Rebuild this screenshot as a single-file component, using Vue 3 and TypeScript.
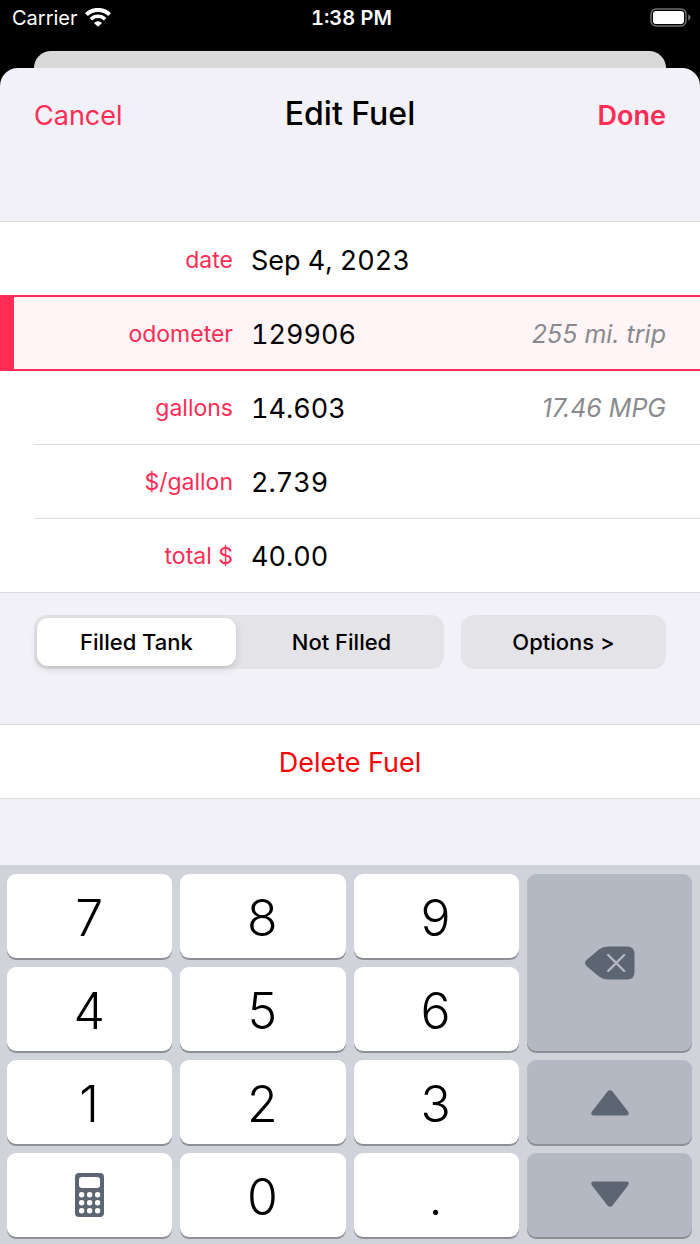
<script setup lang="ts">
import { reactive, ref } from 'vue'

interface Field {
  id: string
  label: string
  value: string
  note?: string
}

const fields = reactive<Field[]>([
  { id: 'date', label: 'date', value: 'Sep 4, 2023' },
  { id: 'odometer', label: 'odometer', value: '129906', note: '255 mi. trip' },
  { id: 'gallons', label: 'gallons', value: '14.603', note: '17.46 MPG' },
  { id: 'price', label: '$/gallon', value: '2.739' },
  { id: 'total', label: 'total $', value: '40.00' },
])

const active = ref(1)
const fill = ref('filled')
const keys = ['7', '8', '9', '4', '5', '6', '1', '2', '3', 'calc', '0', '.']
const dotColumns = [6, 14, 22]
const dotRows = [22, 30, 38]

function press(key: string) {
  if (key !== 'calc') fields[active.value].value += key
}
function erase() {
  fields[active.value].value = fields[active.value].value.slice(0, -1)
}
function move(step: number) {
  active.value = Math.min(fields.length - 1, Math.max(0, active.value + step))
}
</script>

<template>
  <div class="screen">
    <div class="status">
      <div class="carrier">
        <span>Carrier</span>
        <svg width="26" height="19" viewBox="0 0 26 19" aria-hidden="true">
          <g fill="none" stroke="#fff">
            <path d="M1.4 6.6A16.7 16.7 0 0 1 24.6 6.6" stroke-width="4" />
            <path d="M5.9 11.2A10.2 10.2 0 0 1 20.1 11.2" stroke-width="3.6" />
          </g>
          <path d="M9 14.9a5.8 5.8 0 0 1 8 0L13 18.8z" fill="#fff" />
        </svg>
      </div>
      <div class="clock">1:38 PM</div>
      <svg class="battery" width="41" height="20" viewBox="0 0 41 20" aria-hidden="true">
        <rect x="1" y="1" width="35" height="17" rx="5" fill="none" stroke="#707070" stroke-width="1.5" />
        <rect x="3" y="3" width="31" height="13" rx="3" fill="#fff" />
        <path d="M38.2 6.5c3 1 3 5 0 6z" fill="#707070" />
      </svg>
    </div>
    <div class="behind"></div>

    <main class="sheet">
      <header class="bar">
        <button type="button" class="cancel">Cancel</button>
        <h1>Edit Fuel</h1>
        <button type="button" class="done">Done</button>
      </header>

      <form class="fields" @submit.prevent>
        <div v-for="(field, i) in fields" :key="field.id" class="row" :class="{ active: i === active }">
          <label :for="field.id">{{ field.label }}</label>
          <input :id="field.id" v-model="field.value" type="text" autocomplete="off" @focus="active = i" />
          <span v-if="field.note" class="note">{{ field.note }}</span>
        </div>
      </form>

      <div class="choices">
        <div class="segmented" role="radiogroup" aria-label="Tank">
          <label class="segment"><input v-model="fill" type="radio" name="fill" value="filled" /><span>Filled Tank</span></label>
          <label class="segment"><input v-model="fill" type="radio" name="fill" value="partial" /><span>Not Filled</span></label>
        </div>
        <button type="button" class="options">Options &gt;</button>
      </div>

      <button type="button" class="delete">Delete Fuel</button>

      <div class="keyboard">
        <div class="digits">
          <button v-for="key in keys" :key="key" type="button" class="key" :aria-label="key === 'calc' ? 'Calculator' : key" @click="press(key)">
            <svg v-if="key === 'calc'" width="29" height="44" viewBox="0 0 29 44" aria-hidden="true">
              <rect width="29" height="44" rx="4" fill="#5d6573" />
              <rect x="4" y="4" width="21" height="11" rx="3" fill="#fff" />
              <template v-for="y in dotRows" :key="y">
                <circle v-for="x in dotColumns" :key="x" :cx="x + 0.6" :cy="y - 0.2" r="2.7" fill="#fff" />
              </template>
            </svg>
            <span v-else class="digit">{{ key }}</span>
          </button>
        </div>
        <div class="actions">
          <button type="button" class="key dark" aria-label="Delete" @click="erase">
            <svg width="50" height="34" viewBox="0 0 50 34" aria-hidden="true">
              <path d="M1.5 14 14 3.5Q18 .5 23 .5H42Q49.500 .5 49.500 8V26Q49.500 33.500 42 33.500H23Q18 33.500 14 30.500L1.500 20Q-1.500 17 1.500 14Z" fill="#5d6573" />
              <path d="M23.200 9 39.200 25M39.200 9 23.200 25" fill="none" stroke="#b4b8c3" stroke-width="2.4" stroke-linecap="round" />
            </svg>
          </button>
          <button type="button" class="key dark" aria-label="Previous field" @click="move(-1)">
            <svg width="38" height="28" viewBox="0 -2 38 28" aria-hidden="true">
              <path d="M16.500 1.500Q19-1 21.500 1.500L37 21.500Q39 25 35.500 25.500H2.500Q-1 25 1 21.500Z" fill="#5d6573" />
            </svg>
          </button>
          <button type="button" class="key dark" aria-label="Next field" @click="move(1)">
            <svg width="38" height="28" viewBox="0 0 38 28" aria-hidden="true">
              <path d="M16.500 24.500Q19 27 21.500 24.500L37 4.500Q39 1 35.500 .5H2.500Q-1 1 1 4.500Z" fill="#5d6573" />
            </svg>
          </button>
        </div>
      </div>
    </main>
  </div>
</template>

<style>
body {
  margin: 0;
  background: #000;
}
</style>

<style scoped>
.screen {
  display: flex;
  flex-direction: column;
  min-height: 100vh;
  background: #000;
  color: #000;
  font-family: Inter, 'Liberation Sans', sans-serif;
}
.screen *,
.screen {
  box-sizing: border-box;
}
button,
input {
  margin: 0;
  padding: 0;
  border: 0;
  background: none;
  color: inherit;
  font: inherit;
  outline: 0;
}
button {
  cursor: pointer;
}
.status {
  display: grid;
  grid-template-columns: 1fr auto 1fr;
  align-items: center;
  height: 51px;
  padding: 0 9px 16px 12px;
  color: #fff;
  font-size: 20px;
}
.carrier {
  display: flex;
  align-items: center;
  gap: 7px;
}
.clock {
  font-weight: 600;
  font-variant-numeric: tabular-nums;
}
.battery {
  justify-self: end;
}
.behind {
  height: 17px;
  margin: 0 34px;
  border-radius: 17px 17px 0 0;
  background: #d9d9d9;
}
.sheet {
  flex: 1;
  display: flex;
  flex-direction: column;
  border-radius: 18px 18px 0 0;
  background: #f2f1f7;
}
.bar {
  display: grid;
  grid-template-columns: 1fr auto 1fr;
  align-items: baseline;
  height: 153px;
  padding: 24px 34px 0;
  color: #ff2d55;
  font-size: 27px;
}
.cancel {
  justify-self: start;
}
.done {
  justify-self: end;
  font-weight: 600;
}
h1 {
  margin: 0;
  color: #000;
  font-size: 32px;
  font-weight: 500;
  line-height: 44px;
}
.fields {
  border-top: 1px solid #dcdce0;
  border-bottom: 1px solid #dcdce0;
  background: #fff;
}
.row {
  position: relative;
  display: flex;
  align-items: center;
  height: 74px;
  padding: 2px 34px 0 0;
}
.row:not(:last-child)::after {
  content: '';
  position: absolute;
  right: 0;
  bottom: -1px;
  left: 34px;
  height: 1px;
  background: #dcdce0;
}
.row.active {
  background: #fff4f6;
}
.row.active::before {
  content: '';
  position: absolute;
  inset: -1px 0;
  border: solid #ff2d55;
  border-width: 2px 0 2px 14px;
  z-index: 1;
  pointer-events: none;
}
.row label {
  flex: 0 0 233px;
  margin-right: 18px;
  color: #ff2d55;
  font-size: 23px;
  text-align: right;
}
.row input {
  flex: 1;
  min-width: 0;
  font-size: 27px;
  font-variant-numeric: tabular-nums;
}
.note {
  color: #8a8a8e;
  font-size: 25px;
  font-style: italic;
}
.choices {
  display: flex;
  gap: 17px;
  padding: 22px 34px 55px;
  font-size: 22px;
  font-weight: 500;
}
.segmented {
  flex: 2 1 0;
  display: flex;
  height: 54px;
  border-radius: 13px;
  background: #e4e3e8;
}
.segment {
  flex: 1;
  display: flex;
  padding: 3px;
}
.segment input {
  position: absolute;
  opacity: 0;
}
.segment span {
  flex: 1;
  display: flex;
  align-items: center;
  justify-content: center;
  border-radius: 11px;
}
.segment input:checked + span {
  background: #fff;
  box-shadow: 0 3px 8px rgba(0, 0, 0, 0.12), 0 2px 2px rgba(0, 0, 0, 0.04);
}
.options {
  flex: 1 1 0;
  height: 54px;
  border-radius: 13px;
  background: #e4e3e8;
}
.delete {
  height: 75px;
  padding-top: 2px;
  border-top: 1px solid #dcdce0;
  border-bottom: 1px solid #dcdce0;
  background: #fff;
  color: #fb0007;
  font-size: 27px;
}
.keyboard {
  display: grid;
  grid-template-columns: repeat(4, 1fr);
  gap: 8px;
  margin-top: auto;
  padding: 9px 8px 7px 7px;
  background: #d0d3da;
}
.digits {
  grid-column: span 3;
  display: grid;
  grid-template-columns: repeat(3, 1fr);
  grid-auto-rows: 84px;
  gap: 9px 8px;
}
.actions {
  display: grid;
  grid-template-rows: 177px 84px 84px;
  gap: 9px;
}
.key {
  display: flex;
  align-items: center;
  justify-content: center;
  padding-right: 1px;
  border-radius: 9px;
  background: #fff;
  box-shadow: 0 2px 0 #8e8f94;
  font-size: 50px;
  font-weight: 300;
}
.digit {
  padding-top: 3px;
}
.dark {
  padding: 0 0 0 2px;
  background: #b4b8c3;
}
</style>
